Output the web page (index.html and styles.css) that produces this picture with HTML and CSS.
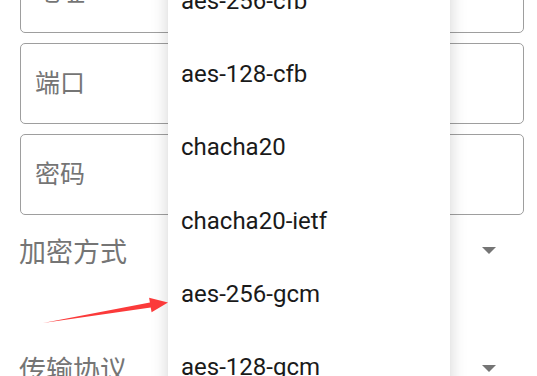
FILE: index.html
```html
<!DOCTYPE html>
<html lang="en">
<head>
    <meta charset="UTF-8">
    <meta name="viewport" content="width=device-width, initial-scale=1.0">
    <title>Shadowsocks 配置</title>
    <link rel="stylesheet" href="styles.css">
</head>
<body>
    <div class="screen">
        <div class="form">
            <div class="field"><span>地址</span></div>
            <div class="field"><span>端口</span></div>
            <div class="field"><span>密码</span></div>

            <div class="spinner">
                <span class="spinner-label">加密方式</span>
                <span class="caret"></span>
            </div>
            <div class="spinner second">
                <span class="spinner-label">传输协议</span>
                <span class="caret"></span>
            </div>
        </div>

        <!-- dropdown opened over the form -->
        <ul class="menu">
            <li>aes-256-cfb</li>
            <li>aes-128-cfb</li>
            <li>chacha20</li>
            <li>chacha20-ietf</li>
            <li>aes-256-gcm</li>
            <li>aes-128-gcm</li>
        </ul>

        <svg class="pointer" width="537" height="376" viewBox="0 0 537 376">
            <polygon points="43,323 149.9,302.5 149.1,297.8 168,302.5 151.6,312.2 150.7,307.5" fill="#fb3a3a"/>
        </svg>
    </div>
</body>
</html>
```

FILE: styles.css
```css
body {
    margin: 0;
    background-color: #fff;
    font-family: "Noto Sans CJK SC", "Noto Sans", sans-serif;
}
.screen {
    position: relative;
    width: 537px;
    height: 376px;
    overflow: hidden;
}
.form {
    margin-top: -48px;
    padding: 0 13px 0 20px;
}
.field {
    height: 73px;
    border: 1px solid #9e9e9e;
    border-radius: 5px;
    margin-bottom: 10px;
    display: flex;
    align-items: center;
    padding-left: 14px;
    padding-bottom: 6px;
    font-size: 25px;
    color: #757575;
}
.spinner {
    height: 51px;
    margin-top: -10px;
    padding-top: 10px;
    display: flex;
    align-items: center;
    justify-content: space-between;
    padding-right: 28px;
}
.spinner.second {
    margin-top: 57px;
}
.spinner-label {
    font-size: 27px;
    color: #757575;
    margin-left: -1px;
}
.caret {
    width: 0;
    height: 0;
    border-left: 7px solid transparent;
    border-right: 7px solid transparent;
    border-top: 7px solid #757575;
}
.menu {
    position: absolute;
    left: 168px;
    top: -36px;
    width: 282px;
    margin: 0;
    padding: 0;
    list-style: none;
    background-color: #fff;
    box-shadow: 0 0 16px rgba(0, 0, 0, 0.18);
}
.menu li {
    height: 73.3px;
    display: flex;
    align-items: center;
    padding-left: 13px;
    font-family: Roboto, sans-serif;
    font-size: 24px;
    color: #1a1a1a;
}
.pointer {
    position: absolute;
    left: 0;
    top: 0;
}
```
